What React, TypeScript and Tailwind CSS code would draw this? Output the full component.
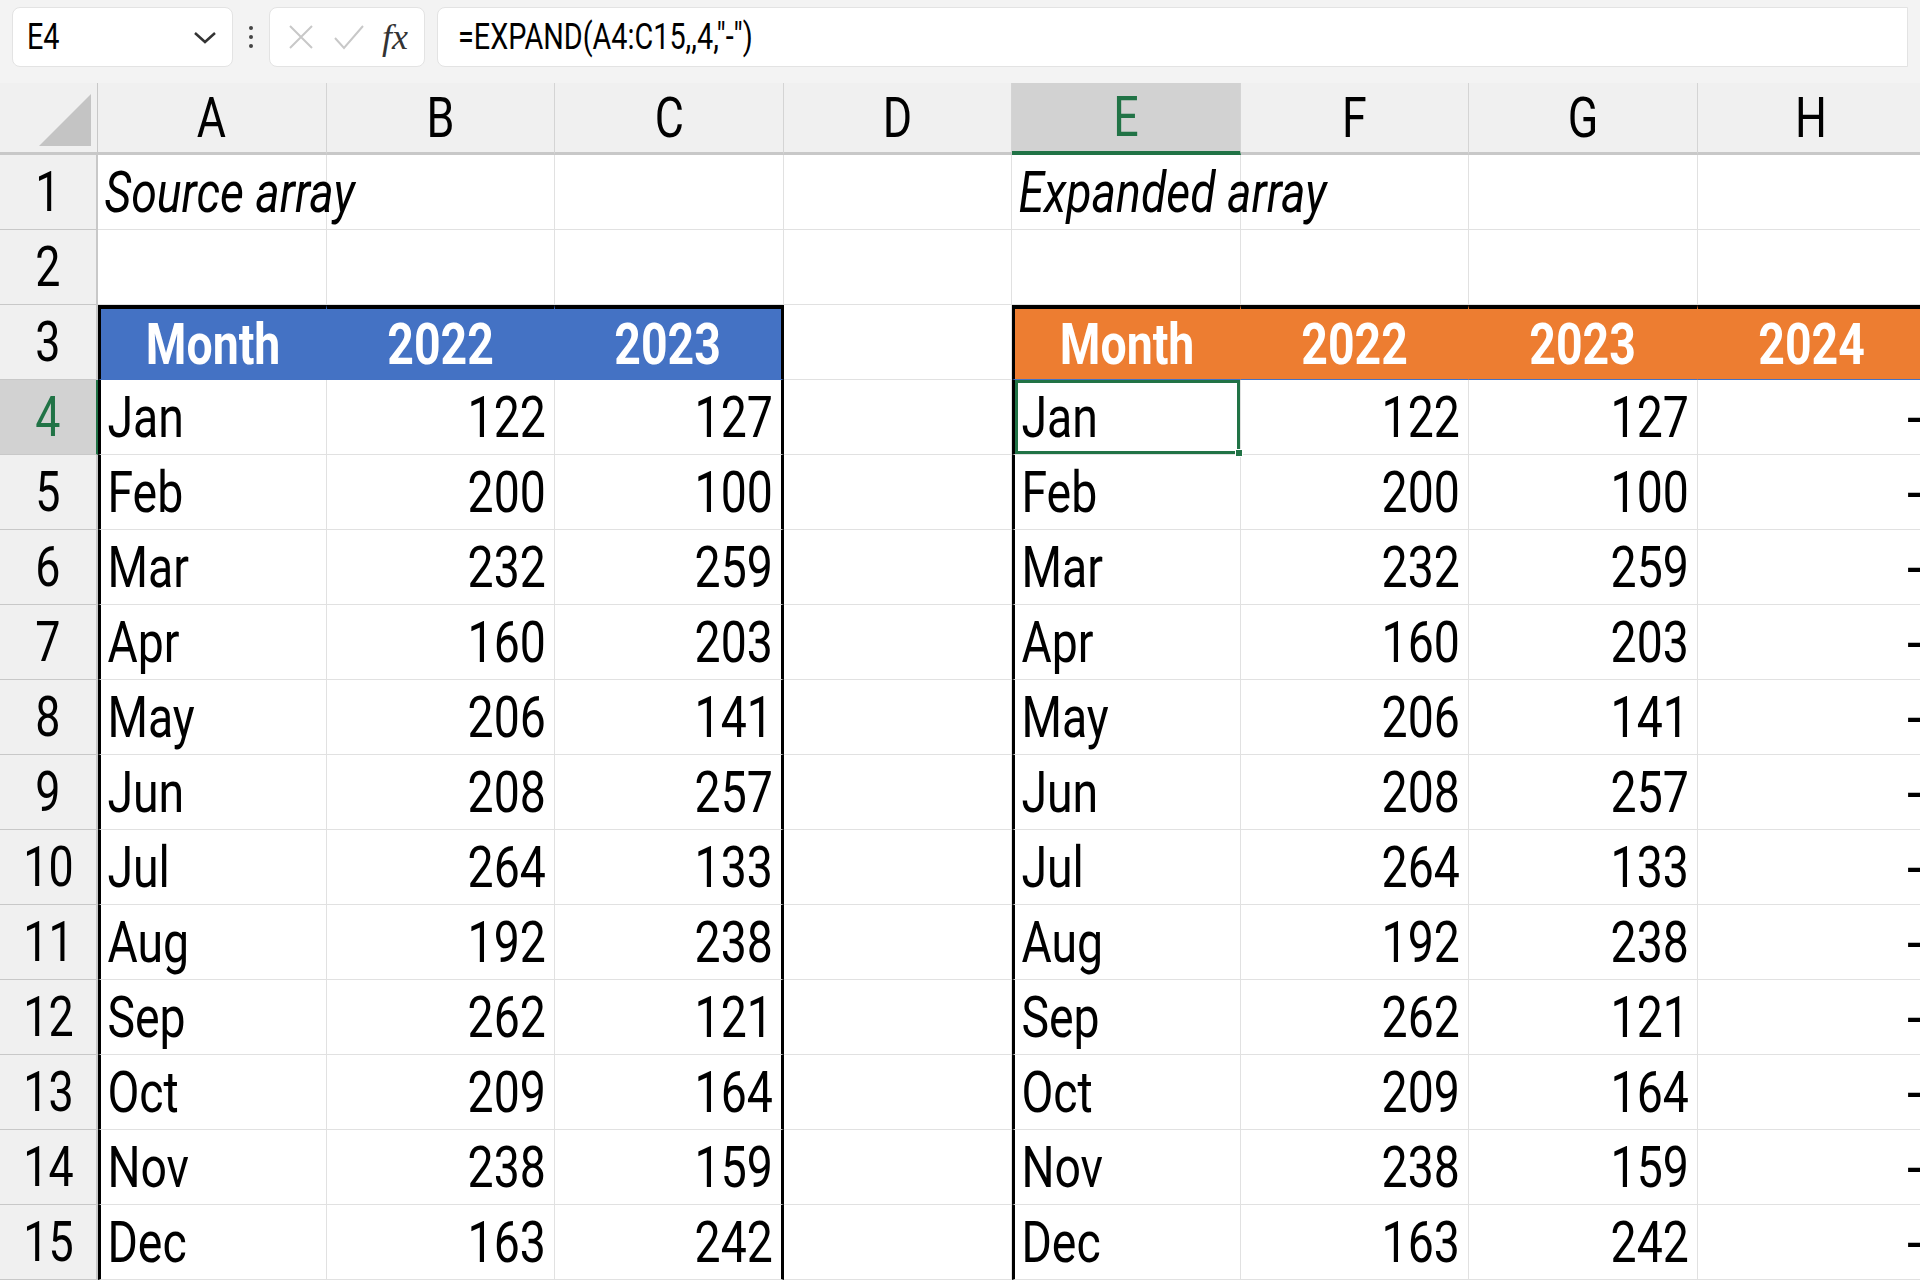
import React from "react"

const cols = ["A", "B", "C", "D", "E", "F", "G", "H"]
const data: [string, number, number][] = [
  ["Jan", 122, 127], ["Feb", 200, 100], ["Mar", 232, 259], ["Apr", 160, 203],
  ["May", 206, 141], ["Jun", 208, 257], ["Jul", 264, 133], ["Aug", 192, 238],
  ["Sep", 262, 121], ["Oct", 209, 164], ["Nov", 238, 159], ["Dec", 163, 242],
]

const font = { fontFamily: 'Roboto, "Liberation Sans", sans-serif' }

// condensed look: Roboto squeezed horizontally
function N({ children, right = false, className = "" }: { children: React.ReactNode; right?: boolean; className?: string }) {
  return (
    <span className={`inline-block scale-x-[0.8] ${right ? "origin-right" : "origin-left"} ${className}`}>{children}</span>
  )
}

function Cell({ children, className = "" }: { children?: React.ReactNode; className?: string }) {
  return (
    <div className={`h-[75px] border-r border-b border-[#e1e1e1] flex items-center text-[58px] text-black whitespace-nowrap ${className}`}>
      {children}
    </div>
  )
}

export default function App() {
  const rows: React.ReactNode[] = []
  for (let r = 1; r <= 15; r++) {
    const sel = r === 4
    rows.push(
      <div key={"h" + r} className={`h-[75px] border-r-2 border-b border-[#c8c8c8] flex items-center justify-center text-[56px] ${sel ? "bg-[#d2d2d2] text-[#217346] border-r-[#217346]" : "bg-[#f0f0f0] text-black"}`}>
        <span className="inline-block scale-x-[0.8]">{r}</span>
      </div>
    )
    for (let c = 0; c < 8; c++) {
      let content: React.ReactNode = null
      let cls = "overflow-hidden"
      if (r === 1 && (c === 0 || c === 4)) {
        cls = "overflow-visible relative z-10"
        content = <N className="italic pl-[8px]">{c === 0 ? "Source array" : "Expanded array"}</N>
      }
      if (r === 3) {
        const blue = c <= 2
        const orange = c >= 4
        if (blue || orange) {
          const label = ["Month", "2022", "2023", "", "Month", "2022", "2023", "2024"][c]
          cls = `overflow-hidden justify-center font-bold text-white ${blue ? "bg-[#4472c4]" : "bg-[#ed7d31]"} border-t-[4px] border-t-black border-b-[#4472c4] ${c === 0 || c === 4 ? "border-l-[3px] border-l-black" : ""} ${c === 2 ? "border-r-[3px] border-r-black" : blue ? "border-r-[#4472c4]" : "border-r-[#ed7d31]"}`
          content = <span className="inline-block scale-x-[0.8]">{label}</span>
        }
      }
      if (r >= 4) {
        const d = data[r - 4]
        const idx = c <= 2 ? c : c - 4
        if (c <= 2 || (c >= 4 && c <= 6)) {
          content = idx === 0 ? <N className="pl-[8px]">{d[0]}</N> : <span className="ml-auto pr-[8px]"><N right>{d[idx]}</N></span>
        }
        if (c === 7) content = <span className="ml-auto pr-[2px]">-</span>
        if (c === 0 || c === 4) cls += " border-l-[3px] border-l-black"
        if (c === 2) cls += " border-r-[3px] border-r-black"
        if (c === 4 && r === 4) cls = cls.replace("overflow-hidden", "") + " relative"
      }
      rows.push(
        <Cell key={r + "-" + c} className={cls}>
          {content}
          {r === 4 && c === 4 && (
            <div className="absolute inset-0 border-[3px] border-[#217346] pointer-events-none">
              <div className="absolute right-[-6px] bottom-[-6px] w-[8px] h-[8px] bg-[#217346] border border-white" />
            </div>
          )}
        </Cell>
      )
    }
  }

  return (
    <div className="w-[1920px] h-[1280px] overflow-hidden bg-white" style={font}>
      <div className="h-[83px] bg-[#f3f3f3] flex items-center gap-[12px] px-[12px] pb-[14px] pt-[4px] text-[36px]">
        <div className="w-[221px] h-[60px] bg-white rounded-[8px] border border-[#e3e3e3] flex items-center justify-between px-[14px]">
          <N>E4</N>
          <svg width="26" height="16" viewBox="0 0 26 16"><path d="M3 4 L13 13 L23 4" stroke="#333" strokeWidth="2.5" fill="none" /></svg>
        </div>
        <div className="flex flex-col gap-[5px] items-center w-[12px]">
          <span className="w-[4px] h-[4px] bg-[#444] rounded-full" />
          <span className="w-[4px] h-[4px] bg-[#444] rounded-full" />
          <span className="w-[4px] h-[4px] bg-[#444] rounded-full" />
        </div>
        <div className="w-[156px] h-[60px] bg-white rounded-[8px] border border-[#e3e3e3] flex items-center justify-around px-[8px]">
          <svg width="30" height="30" viewBox="0 0 30 30"><path d="M4 4 L26 26 M26 4 L4 26" stroke="#c8c8c8" strokeWidth="2" /></svg>
          <svg width="34" height="30" viewBox="0 0 34 30"><path d="M3 16 L12 26 L31 4" stroke="#c8c8c8" strokeWidth="2" fill="none" /></svg>
          <span className="italic text-[36px] text-[#333]" style={{ fontFamily: '"Liberation Serif", serif' }}>fx</span>
        </div>
        <div className="flex-1 h-[60px] bg-white rounded-l-[8px] border border-[#e3e3e3] flex items-center px-[20px]">
          <N>=EXPAND(A4:C15,,4,"-")</N>
        </div>
      </div>
      <div className="grid grid-cols-[98px_repeat(8,228.5px)]">
        <div className="h-[72px] bg-[#f0f0f0] border-r border-b-[3px] border-[#c8c8c8] flex items-end justify-end p-[6px]">
          <div className="w-0 h-0 border-l-[52px] border-l-transparent border-b-[52px] border-b-[#c4c4c4]" />
        </div>
        {cols.map((c) => (
          <div key={c} className={`h-[72px] border-r border-[#d4d4d4] flex items-center justify-center text-[56px] ${c === "E" ? "bg-[#d2d2d2] text-[#217346] border-b-[4px] border-b-[#217346]" : "bg-[#f0f0f0] text-black border-b-[3px] border-b-[#c8c8c8]"}`}>
            <span className="inline-block scale-x-[0.8]">{c}</span>
          </div>
        ))}
        {rows}
      </div>
    </div>
  )
}
